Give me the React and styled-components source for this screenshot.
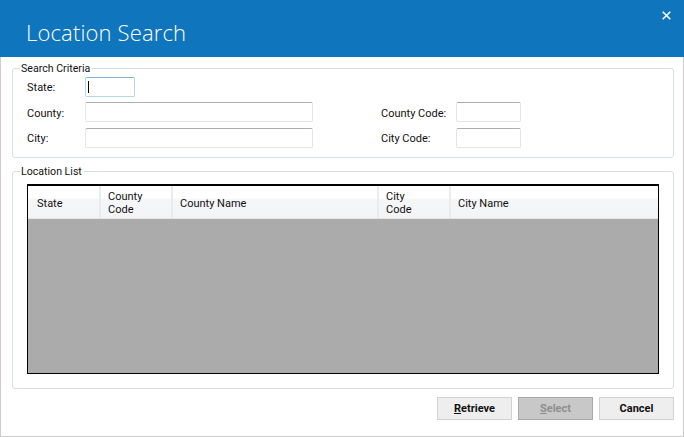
import React from "react";
import styled, {createGlobalStyle} from "styled-components";

const GlobalStyle = createGlobalStyle`
  html, body {
    margin: 0;
    padding: 0;
    background: #fff;
  }
  body {
    font-family: Roboto, "Liberation Sans", sans-serif;
    font-size: 11px;
    color: #111;
  }
`;

const Window = styled.div`
  box-sizing: border-box;
  width: 684px;
  height: 437px;
  display: flex;
  flex-direction: column;
  background: #fff;
  border: 1px solid #cccccc;
  border-top: 0;
`;

const TitleBar = styled.div`
  height: 57px;
  flex: none;
  margin: 0 -1px;
  padding: 0 13px 0 26px;
  display: flex;
  justify-content: space-between;
  background: #0f75bd;
  color: #fff;
`;

const Title = styled.div`
  font-family: "Open Sans", "Liberation Sans", sans-serif;
  font-weight: 300;
  font-size: 22px;
  line-height: 65px;
  letter-spacing: 0.15px;
`;

const CloseButton = styled.svg`
  width: 9px;
  height: 9px;
  margin-top: 11px;
`;

const Body = styled.div`
  flex: 1;
  display: flex;
  flex-direction: column;
  padding: 5px 9px 17px 11px;
`;

const Group = styled.fieldset`
  box-sizing: border-box;
  height: ${props => props.height}px;
  margin: 0 0 ${props => props.gap || 0}px;
  padding: 0;
  border: 1px solid #d5dfe5;
  border-radius: 3px;
  min-width: 0;
`;

const Legend = styled.legend`
  margin-left: 7px;
  padding: 1px 2px 0 1px;
  font-size: 10.6px;
  line-height: 12px;
`;

const CriteriaGrid = styled.div`
  display: grid;
  grid-template-columns: 58px 228px 68px 75px 65px;
  grid-template-rows: 25px 26px 20px;
  margin-top: 2px;
  padding-left: 14px;
  align-items: start;
`;

const Label = styled.label`
  grid-column: ${props => props.col};
  padding-top: ${props => (props.low ? 1 : 0)}px;
  line-height: 21px;
  white-space: nowrap;
`;

const Field = styled.div`
  position: relative;
  grid-column: ${props => props.col};
  width: ${props => props.width}px;
  height: 20px;
`;

const Input = styled.input`
  display: block;
  box-sizing: border-box;
  width: 100%;
  height: 100%;
  margin: 0;
  padding: 0 3px;
  outline: 0;
  background: #fff;
  border: 1px solid ${props => (props.focused ? "#b5d7ee" : "#e2e4e9")};
  border-top-color: ${props => (props.focused ? "#7eb4d9" : "#abadb3")};
  border-radius: 2px;
`;

const Caret = styled.span`
  position: absolute;
  left: 3px;
  top: 4px;
  width: 1px;
  height: 12px;
  background: #000;
`;

const ListFrame = styled.div`
  box-sizing: border-box;
  height: 190px;
  margin: 6px 14px 0;
  display: flex;
  flex-direction: column;
  background: #ababab;
  border: 1px solid #000;
  border-top-width: 2px;
`;

const HeaderRow = styled.div`
  display: flex;
  height: 32px;
  flex: none;
  border-bottom: 1px solid #e3e5e7;
  background: linear-gradient(#ffffff 0%, #ffffff 38%, #f5f6f8 42%, #f3f4f6 100%);
`;

const HeaderCell = styled.div`
  box-sizing: border-box;
  width: ${props => props.width}px;
  flex: ${props => (props.width ? "none" : 1)};
  display: flex;
  align-items: center;
  padding: ${props => (props.twoLines ? 1 : 2)}px 0 0 ${props => props.inset || 7}px;
  border-right: ${props => (props.width ? "2px solid #e9ebed" : "0")};
  line-height: 13px;
`;

const Footer = styled.div`
  display: flex;
  justify-content: flex-end;
  gap: 6px;
  margin-top: 8px;
`;

const Button = styled.button`
  box-sizing: border-box;
  width: 75px;
  height: 23px;
  padding: 0;
  font-family: inherit;
  font-size: 11px;
  font-weight: 700;
  color: ${props => (props.disabled ? "#8e8e8e" : "#111")};
  background: ${props => (props.disabled ? "#c8c8c8" : "#eeeeee")};
  border: 1px solid ${props => (props.disabled ? "#a9a9a9" : "#d2d2d2")};

  u {
    text-underline-offset: 1px;
  }
`;

const columns = [
  {key: "state", label: "State", width: 73, inset: 9},
  {key: "countyCode", label: <>County<br />Code</>, width: 72, twoLines: true},
  {key: "countyName", label: "County Name", width: 206},
  {key: "cityCode", label: <>City<br />Code</>, width: 72, twoLines: true},
  {key: "cityName", label: "City Name"},
];

export default () => {
  return (
    <Window>
      <GlobalStyle />
      <TitleBar>
        <Title>Location Search</Title>
        <CloseButton viewBox="0 0 9 9">
          <path d="M0.7 0.7L8.3 8.3M8.3 0.7L0.7 8.3" stroke="#fff" strokeWidth="1.6" fill="none" />
        </CloseButton>
      </TitleBar>
      <Body>
        <Group height={96} gap={7}>
          <Legend>Search Criteria</Legend>
          <CriteriaGrid>
            <Label col={1}>State:</Label>
            <Field col={2} width={50}>
              <Input focused readOnly />
              <Caret />
            </Field>
            <Label col={1} low>County:</Label>
            <Field col={2} width={228}>
              <Input readOnly />
            </Field>
            <Label col={4} low>County Code:</Label>
            <Field col={5} width={65}>
              <Input readOnly />
            </Field>
            <Label col={1}>City:</Label>
            <Field col={2} width={228}>
              <Input readOnly />
            </Field>
            <Label col={4}>City Code:</Label>
            <Field col={5} width={65}>
              <Input readOnly />
            </Field>
          </CriteriaGrid>
        </Group>
        <Group height={224}>
          <Legend>Location List</Legend>
          <ListFrame>
            <HeaderRow>
              {columns.map(column => (
                <HeaderCell key={column.key} width={column.width} inset={column.inset} twoLines={column.twoLines}>
                  <span>{column.label}</span>
                </HeaderCell>
              ))}
            </HeaderRow>
          </ListFrame>
        </Group>
        <Footer>
          <Button><u>R</u>etrieve</Button>
          <Button disabled><u>S</u>elect</Button>
          <Button>Cancel</Button>
        </Footer>
      </Body>
    </Window>
  );
};
